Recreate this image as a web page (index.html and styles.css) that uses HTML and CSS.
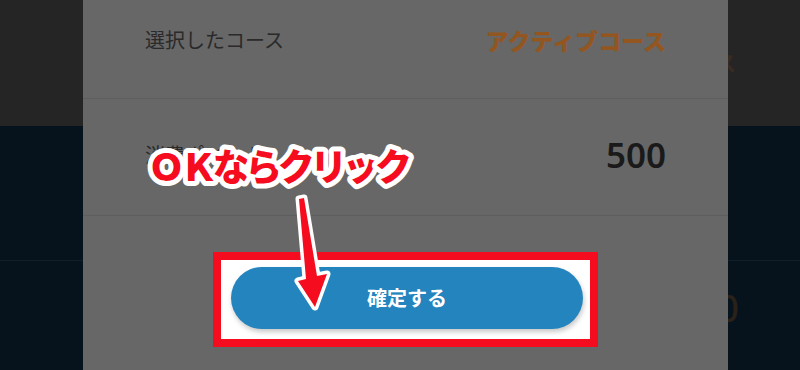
FILE: index.html
```html
<!DOCTYPE html>
<html lang="ja">
<head>
<meta charset="utf-8">
<title>確定</title>
<link rel="stylesheet" href="styles.css">
</head>
<body>
<div class="page">
  <header class="hero"><span class="hero-course">コース</span></header>
  <section class="plans">
    <div class="plan-row"></div>
    <div class="plan-row plan-row--price"><span class="plan-price">500</span></div>
  </section>
</div>

<div class="modal">
  <div class="modal-row modal-row--first">
    <span class="row-label">選択したコース</span>
    <span class="row-course">アクティブコース</span>
  </div>
  <div class="modal-row modal-row--points">
    <span class="row-label">消費ポイント</span>
    <span class="row-points">500</span>
  </div>
  <div class="modal-actions">
    <div class="highlight">
      <button class="confirm" type="button">確定する</button>
    </div>
  </div>
</div>

<svg class="annotation" width="800" height="370" viewBox="0 0 800 370" xmlns="http://www.w3.org/2000/svg">
  <text class="callout" x="148" y="181" textLength="264" lengthAdjust="spacing">ＯＫならクリック</text>
  <polygon class="arrow" points="299,199 304,198 317,276 327,274 315,307 298,281 306,279"/>
</svg>
</body>
</html>
```

FILE: styles.css
```css
html, body {
  margin: 0;
  padding: 0;
}
body {
  width: 800px;
  height: 370px;
  overflow: hidden;
  position: relative;
  font-family: "Noto Sans CJK JP", "Noto Sans", sans-serif;
  background: #06131d;
}

/* dimmed page behind the dialog */
.page {
  display: flex;
  flex-direction: column;
}
.hero {
  height: 126px;
  background: #252525;
  display: flex;
  justify-content: flex-end;
  align-items: center;
  padding: 0 64px 4px 0;
  box-sizing: border-box;
}
.hero-course {
  font-size: 22px;
  font-weight: 700;
  color: #3a2b20;
}
.plans {
  background: #06131d;
  display: flex;
  flex-direction: column;
}
.plan-row {
  height: 134px;
  border-bottom: 1px solid #0f1e28;
}
.plan-row--price {
  height: 90px;
  border-bottom: none;
  display: flex;
  justify-content: flex-end;
  align-items: center;
  padding-right: 61px;
}
.plan-price {
  font-size: 36px;
  font-weight: 500;
  color: #2a2119;
}

/* dialog */
.modal {
  position: absolute;
  left: 83px;
  top: 0;
  width: 645px;
  height: 370px;
  background: #676767;
  display: flex;
  flex-direction: column;
}
.modal-row {
  display: flex;
  justify-content: space-between;
  align-items: center;
  padding: 0 62px;
  border-bottom: 1px solid #5e5e5e;
  box-sizing: border-box;
}
.modal-row--first {
  height: 99px;
  padding-bottom: 19px;
}
.modal-row--points {
  height: 117px;
  padding-bottom: 6px;
}
.row-label {
  font-size: 20px;
  color: #2a2a2a;
}
.row-course {
  font-size: 23px;
  font-weight: 900;
  color: #935620;
}
.row-points {
  font-family: "Noto Sans", "Noto Sans CJK JP", sans-serif;
  font-size: 35px;
  font-weight: 600;
  color: #1a1a1a;
}
.modal-actions {
  display: flex;
  justify-content: center;
  padding-top: 36px;
}
.highlight {
  border: 8px solid #f50c1e;
  background: #ffffff;
  padding: 7px 7px 10px 10px;
  display: flex;
}
.confirm {
  width: 352px;
  height: 62px;
  border: none;
  border-radius: 31px;
  background: #2384be;
  color: #ffffff;
  font-family: "Noto Sans CJK JP", sans-serif;
  font-size: 20px;
  font-weight: 700;
  box-shadow: 1px 3px 5px rgba(0, 0, 0, 0.22);
  padding: 0 0 2px 0;
}

/* annotation layer */
.annotation {
  position: absolute;
  left: 0;
  top: 0;
  pointer-events: none;
}
.callout {
  font-family: "Noto Sans CJK JP", sans-serif;
  font-size: 37px;
  font-weight: 900;
  fill: #f50c1e;
  stroke: #ffffff;
  stroke-width: 10px;
  stroke-linejoin: round;
  paint-order: stroke fill;
}
.arrow {
  fill: #f50c1e;
  stroke: #ffffff;
  stroke-width: 7px;
  stroke-linejoin: round;
  paint-order: stroke fill;
}
```
